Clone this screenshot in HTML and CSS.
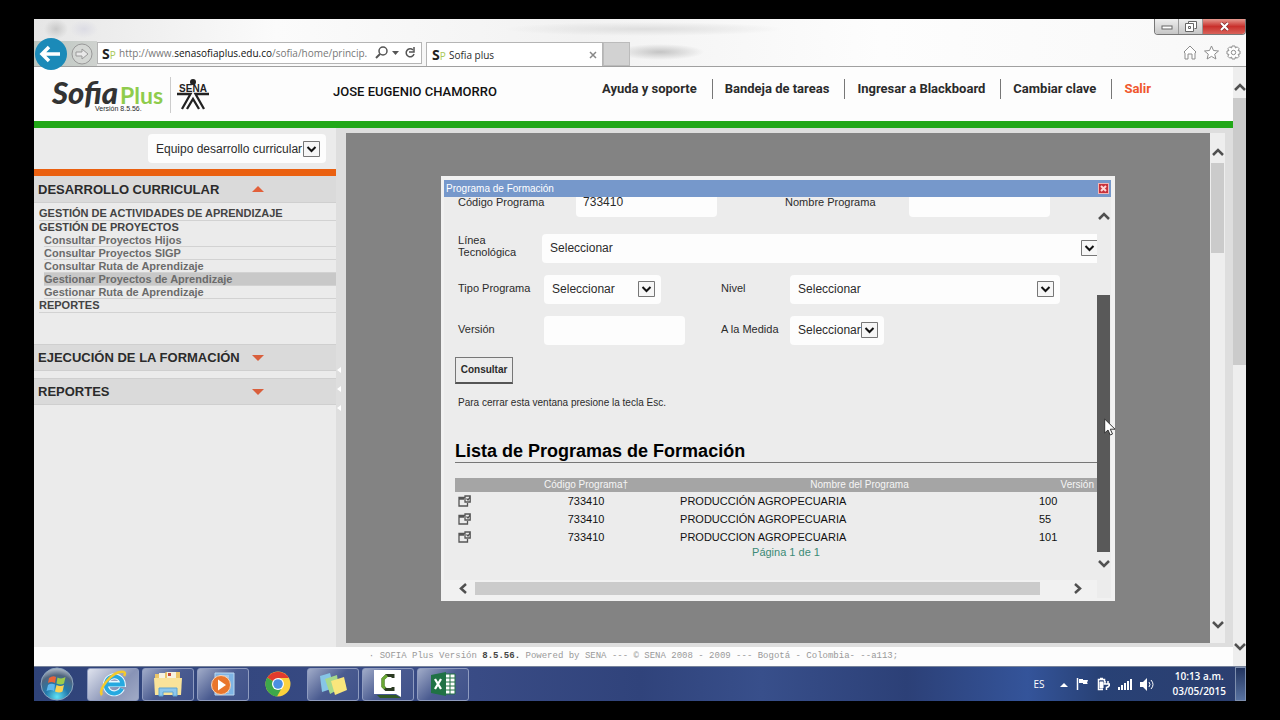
FILE: index.html
```html
<!DOCTYPE html>
<html lang="es">
<head>
<meta charset="utf-8">
<title>Sofia plus</title>
<link rel="stylesheet" href="styles.css">
</head>
<body>
<div class="screen">
  <header class="chrome">
    <div class="titlebar">
      <div class="winbtns">
        <button class="winbtn" aria-label="Minimizar"><svg width="12" height="8" viewBox="0 0 12 8"><rect x="1" y="3" width="10" height="3" fill="#fff" stroke="#666"/></svg></button>
        <button class="winbtn" aria-label="Restaurar"><svg width="12" height="11" viewBox="0 0 12 11"><path d="M3.500 2.500v-2h8v7h-2M.5 2.500h8v8h-8zM3.500 5.500h2v2h-2z" fill="#fff" stroke="#666"/></svg></button>
        <button class="winbtn winclose" aria-label="Cerrar"><svg width="9" height="9" viewBox="0 0 9 9"><path d="M1 1l7 7M8 1L1 8" stroke="#833" stroke-width="3.500"/><path d="M1 1l7 7M8 1L1 8" stroke="#fff" stroke-width="2"/></svg></button>
      </div>
    </div>
    <div class="toolbar">
      <div class="nav">
        <button class="back" aria-label="Atrás"><svg width="32" height="32" viewBox="0 0 32 32"><circle cx="16" cy="16" r="16" fill="#1b8ab8"/><path d="M7 16h18M14 9l-7 7 7 7" fill="none" stroke="#fff" stroke-width="3.500"/></svg></button>
        <button class="fwd" aria-label="Adelante"><svg width="22" height="22" viewBox="0 0 22 22"><circle cx="11" cy="11" r="10" fill="#d4d7d4" stroke="#999"/><path d="M5 9h6V6l6 5-6 5v-3H5z" fill="#e8e8e8" stroke="#999"/></svg></button>
      </div>
      <div class="address">
        <span class="favicon">S<i>P</i></span>
        <span class="url">http://www.<b>senasofiaplus.edu.co</b>/sofia/home/princip.</span>
        <svg width="42" height="14" viewBox="0 0 42 14" fill="none" stroke="#555"><circle cx="8" cy="5" r="4" stroke-width="1.500"/><path d="M5 8l-4 4" stroke-width="2"/><path d="M17 5h7l-3.500 4z" fill="#555" stroke="none"/><path d="M38 4a4 4 0 1 0 1 4" stroke-width="1.500"/><path d="M39 1v5h-5" stroke-width="1.500"/></svg>
      </div>
      <div class="tab"><span class="favicon">S<i>P</i></span><span class="tabname">Sofia plus</span>
        <button class="tabclose" aria-label="Cerrar pestaña"><svg width="8" height="8" viewBox="0 0 8 8"><path d="M1 1l6 6M7 1L1 7" stroke="#888" stroke-width="1.500"/></svg></button></div>
      <div class="newtab"></div>
      <div class="tools">
        <svg width="14" height="15" viewBox="0 0 14 15" fill="#fff" stroke="#8d8d8d"><path d="M1 7l6-6 6 6-1 1v6H9V9H5v5H2V8z"/></svg>
        <svg width="15" height="15" viewBox="0 0 15 15" fill="#fff" stroke="#8d8d8d"><path d="M7.500 1l2 4.500 5 .5-3.800 3.200 1.200 4.800-4.400-2.600L3.100 14l1.200-4.800L.5 6l5-.5z"/></svg>
        <svg width="15" height="15" viewBox="0 0 15 15" fill="#fff" stroke="#8d8d8d"><path d="M6 1h3l.4 2 1.800-1.200 2 2L12 5.600l2 .4v3l-2 .4 1.200 1.800-2 2L9.400 12 9 14H6l-.4-2-1.800 1.200-2-2L3 9.400 1 9V6l2-.4-1.200-1.800 2-2L5.600 3z"/><circle cx="7.500" cy="7.500" r="2.200"/></svg>
      </div>
    </div>
  </header>

  <div class="viewport">
    <div class="page">
      <div class="masthead">
        <div class="logo">
          <span class="sofia">Sofia</span><span class="plus">Plus</span>
          <small class="ver">Versión 8.5.56.</small>
        </div>
        <svg class="sena" width="32" height="31" viewBox="0 0 32 31" aria-label="SENA"><circle cx="16" cy="3" r="3" fill="#222"/><text x="16" y="13" font-family="Liberation Sans" font-size="10" font-weight="bold" text-anchor="middle" fill="#222">SENA</text><path d="M0 15h13.500L5 30M32 15H18.500L27 30M10 30L16 20l6 10" fill="none" stroke="#222" stroke-width="2.300"/></svg>
        <div class="user">JOSE EUGENIO CHAMORRO</div>
        <nav class="links"><a href="#">Ayuda y soporte</a><a href="#">Bandeja de tareas</a><a href="#">Ingresar a Blackboard</a><a href="#">Cambiar clave</a><a href="#" class="exit">Salir</a></nav>
      </div>

      <div class="work">
        <aside class="side">
          <div class="role"><select class="select roleselect" aria-label="Rol"><option>Equipo desarrollo curricular</option></select></div>
          <button class="section first">DESARROLLO CURRICULAR<svg width="12" height="6" viewBox="0 0 12 6"><path d="M0 6l6-6 6 6z" fill="#e2603a"/></svg></button>
          <ul class="menu">
            <li><a href="#">GESTIÓN DE ACTIVIDADES DE APRENDIZAJE</a></li>
            <li class="open"><a href="#">GESTIÓN DE PROYECTOS</a>
              <ul class="submenu">
                <li><a href="#">Consultar Proyectos Hijos</a></li>
                <li><a href="#">Consultar Proyectos SIGP</a></li>
                <li><a href="#">Consultar Ruta de Aprendizaje</a></li>
                <li class="active"><a href="#">Gestionar Proyectos de Aprendizaje</a></li>
                <li><a href="#">Gestionar Ruta de Aprendizaje</a></li>
              </ul></li>
            <li><a href="#">REPORTES</a></li>
          </ul>
          <button class="section">EJECUCIÓN DE LA FORMACIÓN<svg width="12" height="6" viewBox="0 0 12 6"><path d="M0 0l6 6 6-6z" fill="#d95f3c"/></svg></button>
          <button class="section">REPORTES<svg width="12" height="6" viewBox="0 0 12 6"><path d="M0 0l6 6 6-6z" fill="#d95f3c"/></svg></button>
        </aside>
        <div class="gutter"><svg width="5" height="44" viewBox="0 0 5 44" fill="#fff"><path d="M5 0v6L1 3zM5 19v6l-4-3zM5 38v6l-4-3z"/></svg></div>

        <main class="stage">
          <section class="dialog" role="dialog" aria-labelledby="dlg">
            <div class="dlgbar"><span id="dlg">Programa de Formación</span><button class="dlgclose" aria-label="Cerrar"><svg width="7" height="7" viewBox="0 0 7 7"><path d="M1 1l5 5M6 1L1 6" stroke="#ffd5d5" stroke-width="2"/></svg></button></div>
            <div class="dlgbody">
              <div class="content">
                <form class="form">
                  <div class="row code"><label for="cod">Código Programa</label><input id="cod" class="text" value="733410"><label for="nom">Nombre Programa</label><input id="nom" class="text"></div>
                  <div class="row line"><label for="lin">Línea<br>Tecnológica</label><select id="lin" class="select"><option>Seleccionar</option></select></div>
                  <div class="row"><label for="tipo">Tipo Programa</label><div class="cell"><select id="tipo" class="select short"><option>Seleccionar</option></select></div><label for="niv">Nivel</label><select id="niv" class="select wide"><option>Seleccionar</option></select></div>
                  <div class="row"><label for="vers">Versión</label><div class="cell"><input id="vers" class="text"></div><label for="med">A la Medida</label><select id="med" class="select tight"><option>Seleccionar</option></select></div>
                  <button type="button" class="query">Consultar</button>
                  <p class="hint">Para cerrar esta ventana presione la tecla Esc.</p>
                </form>
                <h2 class="heading">Lista de Programas de Formación</h2>
                <table class="list">
                  <thead><tr><th class="c-icon"></th><th class="c-code">Código Programa†</th><th>Nombre del Programa</th><th class="c-ver">Versión</th></tr></thead>
                  <tbody>
                    <tr><td><svg class="pick" viewBox="0 0 13 12"><path d="M7 2.500H1v8.500h8.500V8M1 4h5" /><path d="M7 1h5.200v6H7zM8.500 3.500l1.500 1.500 2-3"/></svg></td><td class="num">733410</td><td>PRODUCCIÓN AGROPECUARIA</td><td>100</td></tr>
                    <tr><td><svg class="pick" viewBox="0 0 13 12"><path d="M7 2.500H1v8.500h8.500V8M1 4h5" /><path d="M7 1h5.200v6H7zM8.500 3.500l1.500 1.500 2-3"/></svg></td><td class="num">733410</td><td>PRODUCCIÓN AGROPECUARIA</td><td>55</td></tr>
                    <tr><td><svg class="pick" viewBox="0 0 13 12"><path d="M7 2.500H1v8.500h8.500V8M1 4h5" /><path d="M7 1h5.200v6H7zM8.500 3.500l1.500 1.500 2-3"/></svg></td><td class="num">733410</td><td>PRODUCCION AGROPECUARIA</td><td>101</td></tr>
                  </tbody>
                </table>
                <p class="pager">Página 1 de 1</p>
              </div>
              <div class="hscroll"><svg width="8" height="11" viewBox="0 0 8 11"><path d="M7 1L2 5.500 7 10" class="chev"/></svg><div class="hthumb"></div><svg width="8" height="11" viewBox="0 0 8 11"><path d="M1 1l5 4.500L1 10" class="chev"/></svg></div>
              <div class="vscroll dark"><svg width="12" height="8" viewBox="0 0 12 8"><path d="M1 7l5-5 5 5" class="chev"/></svg><div class="vthumb"></div><svg width="12" height="8" viewBox="0 0 12 8"><path d="M1 1l5 5 5-5" class="chev"/></svg></div>
            </div>
            <svg class="pointer" width="12" height="18" viewBox="0 0 12 18"><path d="M.7 1v14l3.300-3 2.200 5 2.300-1-2.200-4.800H11z" fill="#fff" stroke="#333"/></svg>
          </section>
        </main>
        <div class="vscroll inner"><svg width="12" height="8" viewBox="0 0 12 8"><path d="M1 7l5-5 5 5" class="chev"/></svg><div class="vthumb"></div><svg width="12" height="8" viewBox="0 0 12 8"><path d="M1 1l5 5 5-5" class="chev"/></svg></div>
      </div>
      <footer class="foot">· SOFIA Plus Versión <b>8.5.56.</b> Powered by SENA --- © SENA 2008 - 2009 --- Bogotá - Colombia- --a113;</footer>
    </div>
    <div class="vscroll outer"><svg width="12" height="8" viewBox="0 0 12 8"><path d="M1 7l5-5 5 5" class="chev"/></svg><div class="vthumb"></div><svg width="12" height="8" viewBox="0 0 12 8"><path d="M1 1l5 5 5-5" class="chev"/></svg></div>
  </div>

  <div class="taskbar">
    <button class="start" aria-label="Inicio"><svg width="34" height="34" viewBox="0 0 34 34"><defs><radialGradient id="orb" cx=".5" cy=".9" r=".9"><stop offset="0" stop-color="#5fe3f5"/><stop offset=".4" stop-color="#2379ab"/><stop offset=".75" stop-color="#50657f"/><stop offset="1" stop-color="#b5bfcc"/></radialGradient></defs><circle cx="17" cy="17" r="16" fill="url(#orb)" stroke="#8ca6bf"/><path d="M9 11q4-3 7-1l-1 6q-4-2-7 0z" fill="#e8643a"/><path d="M17.500 10.500q4 2 8-.5l-1.500 6.500q-3 2-7.500 0z" fill="#9ccc4c"/><path d="M8 18q3-2 7-.5L14 24q-3-2-7.500 0z" fill="#5fb8ee"/><path d="M16.500 18q4 2 7.500 0l-1.500 6.500q-3 2-7.500 0z" fill="#fbd252"/></svg></button>
    <button class="task on" aria-label="Internet Explorer"><svg width="30" height="30" viewBox="0 0 30 30"><path d="M24 19.500a8.500 8.500 0 1 1 .8-4.500H9" fill="none" stroke="#e9f8ff" stroke-width="6"/><path d="M24 19.500a8.500 8.500 0 1 1 .8-4H9" fill="none" stroke="#26a9e0" stroke-width="4"/><path d="M4 26C-1 21 15 1 26 3q2 1 0 4" fill="none" stroke="#f4c92e" stroke-width="2.500"/></svg></button>
    <button class="task" aria-label="Explorador"><svg width="30" height="28" viewBox="0 0 30 28"><path d="M2 4h9l2-2h14v21H2z" fill="#ecc668"/><path d="M6 3h6v5H6zM14 2h9v6h-9z" fill="#f6f2df"/><path d="M15 3h3v3h-3z" fill="#c74c3c"/><path d="M1 8h28l-1 17H2z" fill="#f9e39a"/><path d="M6 26v-8h18v8h-4v-4H10v4z" fill="#8dc7ec" stroke="#5ca4d4"/></svg></button>
    <button class="task" aria-label="Reproductor"><svg width="26" height="26" viewBox="0 0 26 26"><path d="M5 2h19v22H5z" fill="#7fb4e4" stroke="#bbd7ef"/><path d="M9 4h10v18H9z" fill="#a8cbea"/><circle cx="11" cy="14" r="9.500" fill="#e9762d" stroke="#f7d2b5"/><path d="M8 8.500v11l8-5.500z" fill="#fff"/></svg></button>
    <button class="task plain" aria-label="Chrome"><svg width="26" height="26" viewBox="0 0 26 26"><circle cx="13" cy="13" r="12.500" fill="#fbd13d"/><path d="M13 13L2.200 6.700A12.500 12.500 0 0 1 23.800 7H13z" fill="#e23b2e"/><path d="M13 13L2.200 6.700A12.500 12.500 0 0 0 12 25.500l5-9z" fill="#3da84a"/><circle cx="13" cy="13" r="6" fill="#fff"/><circle cx="13" cy="13" r="4.800" fill="#4b8fe2"/></svg></button>
    <button class="task" aria-label="Notas"><svg width="30" height="26" viewBox="0 0 30 26"><path d="M2 5l10-3 4 15-12 4z" fill="#86c5e6"/><path d="M7 8l12-4 2 14-9 5z" fill="#a6d98c"/><path d="M13 10l13-4 3 13-12 5z" fill="#f9e67c"/></svg></button>
    <button class="task" aria-label="Camtasia"><svg width="30" height="30" viewBox="0 0 30 30"><path d="M1 1h27v27l-5-3H1z" fill="#fff"/><path d="M4 26h19l5 3H7z" fill="#315a24"/><path d="M20 9V6.500h-6.500L10 10v7.500l3 3h7V18" fill="none" stroke="#2b3a22" stroke-width="3"/><path d="M14 6.500L10 10v7.500l2 2" fill="none" stroke="#69a834" stroke-width="3"/></svg></button>
    <button class="task" aria-label="Excel"><svg width="28" height="26" viewBox="0 0 28 26"><path d="M15 3h11v20H15z" fill="#fff" stroke="#207245"/><path d="M16 7h10M16 11h10M16 15h10M16 19h10M21 3v20" stroke="#207245"/><path d="M2 4l15-3v24L2 22z" fill="#207245"/><path d="M6 8l6 10M12 8L6 18" stroke="#fff" stroke-width="2.300"/></svg></button>
    <div class="tray">
      <span class="lang">ES</span>
      <svg width="8" height="5" viewBox="0 0 8 5"><path d="M0 5l4-4 4 4z" fill="#fff"/></svg>
      <svg width="13" height="14" viewBox="0 0 13 14"><path d="M1.500 1v12" stroke="#fff" stroke-width="1.500"/><path d="M3 2h4v1h5l-1 3 1 1H7V6H3z" fill="#fff"/></svg>
      <svg width="13" height="14" viewBox="0 0 13 14" fill="none" stroke="#fff"><path d="M6 12.500H1.500v-10h6V5M3 1.500h3" stroke-width="1.500"/><path d="M3 5h3v6H3z" fill="#fff"/><path d="M8 4v3M11 4v3M6.500 7h6q0 3-3 3.500V13" stroke-width="1.500"/></svg>
      <svg width="14" height="12" viewBox="0 0 14 12" fill="#fff"><path d="M0 9h2v3H0zM3 7h2v5H3zM6 5h2v7H6zM9 3h2v9H9zM12 1h2v11h-2z"/></svg>
      <svg width="14" height="13" viewBox="0 0 14 13" fill="#fff"><path d="M0 4h3l4-4v13L3 9H0z"/><path d="M9 4q2 2.500 0 5M11 2q4 4.500 0 9" fill="none" stroke="#fff"/></svg>
      <time class="clock">10:13 a.m.<br>03/05/2015</time>
    </div>
    <div class="peek"></div>
  </div>
</div>
</body>
</html>
```

FILE: styles.css
```css
* { box-sizing: border-box; }
body { margin: 0; background: #000; font-family: "Liberation Sans", Arial, sans-serif; font-size: 12px; color: #2b2b2b; }
button, input, select { font: inherit; color: inherit; margin: 0; border: 0; padding: 0; background: none; }
ul, p, h2 { margin: 0; padding: 0; list-style: none; }
a { color: inherit; text-decoration: none; }
svg { display: block; flex: none; }
.screen { display: flex; flex-direction: column; height: 100vh; min-height: 600px; padding: 19px 34px; overflow: hidden; }

/* browser frame */
.chrome { background: radial-gradient(ellipse 12px 10px at 22px 10px, #c9c9c9, transparent), radial-gradient(ellipse 14px 9px at 50px 10px, #dcdce4, transparent), radial-gradient(ellipse 140px 7px at 610px 10px, #dedede, transparent), radial-gradient(ellipse 44px 8px at 626px 33px, #c4c4c4, transparent), linear-gradient(90deg, #e6e6e6, #fbfbfb 20%, #f2f2f2 45%, #fdfdfd 70%, #f8f8f8); border-bottom: 1px solid #a0a0a0; }
.titlebar { display: flex; justify-content: flex-end; height: 22px; }
.winbtns { display: flex; height: 16px; border: 1px solid #777; border-top: 0; border-radius: 0 0 4px 4px; overflow: hidden; }
.winbtn { display: flex; align-items: center; justify-content: center; width: 24px; border-right: 1px solid #999; background: linear-gradient(#eee, #c6c6c6); }
.winclose { width: 42px; border: 0; background: linear-gradient(#e69a90, #c9302c 50%, #d9635a); }
.toolbar { display: flex; height: 25px; align-items: flex-end; }
.nav { display: flex; align-items: center; width: 63px; height: 25px; gap: 4px; background: linear-gradient(90deg, #b9c4bd, #cfd2cf); }
.back { margin-left: 1px; z-index: 1; }
.address { display: flex; align-items: center; width: 325px; height: 22px; margin-bottom: 2px; padding: 0 4px; border: 1px solid #b5b5b5; background: #fff; }
.favicon { width: 17px; font: bold 14px "Open Sans", sans-serif; color: #222; }
.favicon i { font: 10px "Open Sans", sans-serif; color: #a9c957; }
.url { flex: 1; white-space: nowrap; font-family: "Open Sans", sans-serif; font-size: 10px; color: #777; }
.url b { font-weight: normal; color: #111; }
.tab { display: flex; align-items: center; width: 177px; height: 24px; margin-left: 4px; padding: 0 5px; border: 1px solid #b5b5b5; border-bottom: 0; background: #fff; }
.tabname { flex: 1; font-family: "Open Sans", sans-serif; font-size: 10px; }
.newtab { width: 27px; height: 24px; border: 1px solid #bbb; background: #d2d2d2; }
.tools { display: flex; gap: 7px; margin-left: auto; padding: 0 5px 6px; }

/* scroll bars */
.chev { fill: none; stroke: #505050; stroke-width: 2.5; }
.vscroll { display: flex; flex-direction: column; align-items: center; background: #eee; }
.vscroll .vthumb { width: 13px; background: #cbcbcb; }
.vscroll svg:last-child { margin-top: auto; }
.outer { width: 13px; padding: 16px 0 15px; }
.outer .vthumb { height: 47%; margin-top: 7px; }
.inner { width: 15px; padding: 15px 0 14px; }
.inner .vthumb { height: 90px; margin-top: 7px; }
.dark { grid-area: 1 / 2 / 3 / 3; width: 14px; padding: 15px 0 30px; background: #ececec; }
.dark .vthumb { flex: 1; margin: 75px 0 8px; background: #595959; }

/* page */
.viewport { flex: 1; display: flex; min-height: 0; }
.page { flex: 1; display: flex; flex-direction: column; min-width: 0; }
.masthead { display: flex; align-items: flex-start; height: 61px; padding: 10px 82px 0 18px; border-bottom: 7px solid #22a818; background: #fdfdfd; }
.logo { position: relative; display: flex; align-items: baseline; gap: 2px; width: 119px; height: 36px; border-right: 1px solid #ccc; }
.sofia { font: italic 900 31px/30px Lato, sans-serif; color: #333; }
.plus { font: bold 23px/30px Lato, sans-serif; color: #8fcc4c; }
.ver { position: absolute; left: 43px; bottom: 0; font-size: 7px; line-height: 8px; }
.sena { margin: 2px 0 0 6px; }
.user { margin: 8px 0 0 124px; font: 500 13px/14px Roboto, sans-serif; color: #111; }
.links { display: flex; margin: 2px 0 0 auto; font: bold 13px/20px Roboto, sans-serif; }
.links a { padding: 0 15px 0 12px; border-right: 1px solid #777; }
.links a:last-child { padding-right: 0; border: 0; }
.links .exit { color: #f0562c; }

.work { flex: 1; display: flex; min-height: 0; padding-right: 8px; background: #dedede; }
.side { width: 302px; background: #ebebeb; }
.role { display: flex; justify-content: flex-end; height: 48px; padding: 6px 10px 0 0; border-bottom: 7px solid #ea6010; }
.section { position: relative; display: flex; align-items: center; width: 100%; height: 27px; margin-bottom: 7px; padding: 0 4px; border: solid #cfcfcf; border-width: 1px 0; background: #dadada; font-size: 13px; font-weight: bold; text-align: left; }
.section svg { position: absolute; left: 72%; margin-left: 1px; }
.section.first { margin-bottom: 3px; border-top: 0; }
.menu { min-height: 138px; padding-left: 5px; font-size: 11px; line-height: 13px; font-weight: bold; color: #444; }
.menu li { border-bottom: 1px solid #d2d2d2; }
.menu > li:first-child { padding-top: 1px; }
.menu .open { border: 0; }
.submenu { padding-left: 5px; line-height: 12px; color: #6b6b6b; }
.menu .active { background: #c8c8c8; }
.gutter { width: 10px; padding-top: 239px; }
.stage { flex: 1; display: flex; align-items: center; justify-content: center; margin: 5px 0 4px; background: #838383; }
.inner { margin: 5px 0 4px; }
.foot { height: 19px; background: #fdfdfd; color: #999; font: 9px/19px "Liberation Mono", monospace; text-align: center; white-space: nowrap; }
.foot b { color: #444; }

/* dialog */
.dialog { position: relative; display: flex; flex-direction: column; width: 78%; height: 83%; min-height: 425px; padding: 4px 4px 3px 3px; background: #f1f1f1; }
.dlgbar { display: flex; align-items: center; justify-content: space-between; height: 17px; padding: 0 2px; background: #7698cb; color: #fff; font-size: 10px; }
.dlgclose { display: flex; align-items: center; justify-content: center; width: 11px; height: 11px; border: 1px solid #f2b6b6; background: #c8323c; }
.dlgbody { flex: 1; display: grid; grid-template: 1fr 18px / 1fr 14px; min-height: 0; overflow: hidden; background: #ececec; }
.content { padding: 0 0 0 11px; min-width: 0; min-height: 0; overflow: hidden; }
.form { display: flex; flex-direction: column; gap: 12px; margin-top: -9px; font-size: 11px; }
.row { display: flex; padding-left: 3px; line-height: 12px; }
.row label { width: 86px; padding-top: 7px; }
.row .cell { width: 177px; }
.row .cell + label { width: 69px; }
.row.code { margin-bottom: 5px; }
.row.code label:first-child { width: 118px; }
.row.code label { width: 124px; padding-top: 8px; }
.row.code .text:nth-child(2) { margin-right: 68px; }
.row.line label { width: 84px; padding-top: 0; }
.text, .select { height: 29px; border-radius: 4px; background-color: #fdfdfd; font-size: 12px; }
.text { width: 141px; padding: 0 7px; }
.select { appearance: none; padding: 0 8px; background-image: url("data:image/svg+xml,%3Csvg xmlns='http://www.w3.org/2000/svg' width='17' height='16'%3E%3Cpath d='M.5.5h16v15H.5z' fill='%23f6f6f6' stroke='%23777'/%3E%3Cpath d='M4.500 6l4 4 4-4' fill='none' stroke='%23111' stroke-width='2'/%3E%3C/svg%3E"); background-repeat: no-repeat; background-position: right 6px center; }
.roleselect { width: 178px; }
.row.line .select { flex: 1; border-radius: 4px 0 0 4px; background-position: right -1px center; }
.short { width: 117px; }
.wide { width: 270px; }
.tight { width: 94px; }
.query { align-self: flex-start; width: 58px; height: 27px; border: 1px solid #777; border-bottom: 2px solid #555; font-size: 10px; font-weight: bold; }
.hint { padding-left: 3px; font-size: 10px; line-height: 14px; }
.heading { margin-top: 30px; border-bottom: 1px solid #777; font-size: 18px; line-height: 22px; color: #000; }
.list { width: 100%; margin-top: 15px; border-collapse: collapse; table-layout: fixed; font-size: 11px; line-height: 18px; color: #111; }
.list th, .list td { padding: 0; text-align: left; }
.list th { height: 14px; background: #a5a5a5; color: #f5f5f5; font-size: 10px; font-weight: normal; line-height: 14px; text-align: center; }
.list .c-icon { width: 37px; }
.list .c-code { width: 188px; }
.list .c-ver { width: 58px; text-align: right; padding-right: 3px; }
.list .num { text-align: center; }
.pick { width: 13px; height: 12px; margin-left: 3px; fill: none; stroke: #555; stroke-width: 1.3; }
.pager { padding-left: 20px; font-size: 11px; line-height: 12px; text-align: center; color: #3b8a76; }
.hscroll { display: flex; align-items: center; gap: 8px; height: 18px; padding: 0 15px; background: #f1f1f1; }
.hthumb { flex: 1; height: 13px; margin-right: 26px; background: #cbcbcb; }
.pointer { position: absolute; right: -1px; top: 57%; }

/* task bar */
.taskbar { display: flex; align-items: center; gap: 3px; height: 35px; border-top: 1px solid #77839b; background: linear-gradient(90deg, #2f4379, #3a4c86 35%, #30437b 50%, #384f8b 60%, #2c4077 72%, #34549a 82%, #284175 88%, #2c3f70); }
.start { width: 47px; padding-left: 6px; margin-right: 3px; }
.task { display: flex; align-items: center; justify-content: center; width: 52px; height: 33px; border: 1px solid #8f9cc0; border-radius: 3px; background: linear-gradient(135deg, #a0abc8, #4a5b90 50%, #40528a); }
.task.on { background: linear-gradient(135deg, #dfe3ee, #8893b6 60%, #a0aac6); }
.task.plain { border-color: transparent; background: none; }
.tray { display: flex; align-items: center; gap: 8px; margin-left: auto; color: #fff; font-family: "Open Sans", sans-serif; font-size: 10px; }
.lang { margin-right: 8px; }
.clock { margin-left: 10px; font-weight: 600; line-height: 15px; text-align: center; }
.peek { width: 11px; height: 34px; margin-left: 6px; border: 1px solid #7e8fae; background: linear-gradient(#22345f, #5872a0); }
```
